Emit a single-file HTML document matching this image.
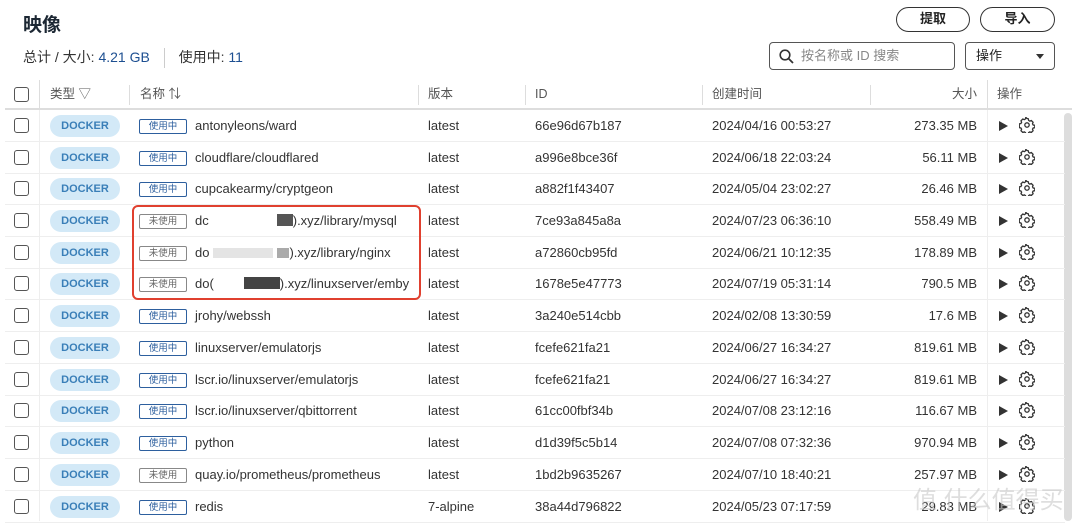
<!DOCTYPE html>
<html><head><meta charset="utf-8">
<style>
*{margin:0;padding:0;box-sizing:border-box}
body{width:1080px;height:521px;overflow:hidden;background:#fff;font-family:"Liberation Sans","Noto Sans CJK SC",sans-serif;color:#222;position:relative}
.abs{position:absolute}
h1{position:absolute;left:23px;top:10px;font-size:19px;font-weight:bold;color:#1c2733}
.sum{position:absolute;left:23px;top:47px;font-size:14px;color:#333}
.sum b{color:#1d4f91;font-weight:normal}
.btn{position:absolute;top:7px;height:25px;border:1.5px solid #333;border-radius:13px;font-size:13px;font-weight:bold;text-align:center;line-height:22px;color:#222}
.search{position:absolute;left:769px;top:42px;width:186px;height:28px;border:1.3px solid #555;border-radius:4px;font-size:13px;color:#888;line-height:26px;padding-left:31px}
.sel{position:absolute;left:965px;top:42px;width:90px;height:28px;border:1.3px solid #555;border-radius:4px;font-size:13px;color:#222;line-height:26px;padding-left:10px}
.hdr{position:absolute;left:5px;top:80px;width:1067px;height:30px;border-bottom:2px solid #ddd}
.hdr span{position:absolute;top:6px;font-size:12.5px;color:#555;line-height:16px}
.vs{position:absolute;top:5px;width:1px;height:20px;background:#ddd}
.row{position:absolute;left:5px;width:1060px;height:32px;border-bottom:1px solid #eee}
.cb{position:absolute;left:9px;top:8px;width:15px;height:15px;border:1.7px solid #555;border-radius:3px}
.pill{position:absolute;left:45px;top:5px;width:70px;height:22px;border-radius:11px;background:#d3e9f7;color:#3a7fb8;font-size:11px;font-weight:bold;text-align:center;line-height:23px}
.tag{position:absolute;left:134px;top:9px;width:48px;height:15px;border:1px solid #2d5f9e;border-radius:2px;font-size:9.5px;color:#2d5f9e;text-align:center;line-height:13px}
.tag.un{border-color:#888;color:#666}
.row span{position:absolute;top:8px;font-size:13px;color:#333;white-space:nowrap;line-height:16px}
.nm{left:190px}.vr{left:423px}.id{left:530px}.tm{left:707px}.sz{right:88px;text-align:right}
.play{position:absolute;left:994px;top:11px;width:0;height:0;border-left:9px solid #333;border-top:5px solid transparent;border-bottom:5px solid transparent}
.gear{position:absolute;left:1014px;top:7px}
</style></head><body>
<svg width="0" height="0" style="position:absolute"><defs><g id="g"><path d="M8 1.5l1.3.3.3 1.6 1.2.7 1.5-.6 1.8 1.8-.6 1.5.7 1.2 1.6.3v2.4l-1.6.3-.7 1.2.6 1.5-1.8 1.8-1.5-.6-1.2.7-.3 1.6H6.8l-.3-1.6-1.2-.7-1.5.6-1.8-1.8.6-1.5-.7-1.2-1.6-.3V6.8l1.6-.3.7-1.2-.6-1.5 1.8-1.8 1.5.6 1.2-.7.3-1.6z" fill="none" stroke="#333" stroke-width="1.3"/><circle cx="8" cy="8" r="2.2" fill="none" stroke="#333" stroke-width="1.3"/></g></defs></svg>
<h1>映像</h1>
<div class="sum">总计 / 大小: <b>4.21 GB</b> <span style="display:inline-block;width:1px;height:20px;background:#ccc;vertical-align:middle;margin:0 10px"></span> 使用中: <b>11</b></div>
<div class="btn" style="left:896px;width:74px">提取</div>
<div class="btn" style="left:980px;width:75px">导入</div>
<div class="search"><svg class="abs" style="left:9px;top:6px" width="15" height="15" viewBox="0 0 15 15"><circle cx="6" cy="6" r="4.8" fill="none" stroke="#333" stroke-width="1.6"/><path d="M9.5 9.5L14 14" stroke="#333" stroke-width="1.8"/></svg>按名称或 ID 搜索</div>
<div class="sel">操作<span class="abs" style="right:10px;top:11px;width:0;height:0;border-left:4.5px solid transparent;border-right:4.5px solid transparent;border-top:5px solid #333"></span></div>
<div class="hdr">
<div class="cb" style="top:7px"></div>
<div class="vs" style="left:34px;top:0;height:30px"></div>
<span style="left:45px">类型 ▽</span>
<div class="vs" style="left:124px"></div>
<span style="left:135px">名称 ⇅</span>
<div class="vs" style="left:413px"></div>
<span style="left:423px">版本</span>
<div class="vs" style="left:520px"></div>
<span style="left:530px">ID</span>
<div class="vs" style="left:697px"></div>
<span style="left:707px">创建时间</span>
<div class="vs" style="left:865px"></div>
<span style="right:95px">大小</span>
<div class="vs" style="left:982px;top:0;height:30px"></div>
<span style="left:992px">操作</span>
</div>
<div class="abs" style="left:39px;top:110px;width:1px;height:411px;background:#eee"></div>
<div class="abs" style="left:987px;top:110px;width:1px;height:411px;background:#eee"></div>
<div class="abs" style="left:1064px;top:113px;width:8px;height:408px;background:#ddd;border-radius:4px"></div>

<div class="row" style="top:110px"><div class="cb"></div><div class="pill">DOCKER</div><div class="tag">使用中</div><span class="nm">antonyleons/ward</span><span class="vr">latest</span><span class="id">66e96d67b187</span><span class="tm">2024/04/16 00:53:27</span><span class="sz">273.35 MB</span><div class="play"></div><svg class="gear" width="16" height="16" viewBox="0 0 16 16"><use href="#g"/></svg></div>
<div class="row" style="top:142px"><div class="cb"></div><div class="pill">DOCKER</div><div class="tag">使用中</div><span class="nm">cloudflare/cloudflared</span><span class="vr">latest</span><span class="id">a996e8bce36f</span><span class="tm">2024/06/18 22:03:24</span><span class="sz">56.11 MB</span><div class="play"></div><svg class="gear" width="16" height="16" viewBox="0 0 16 16"><use href="#g"/></svg></div>
<div class="row" style="top:173px"><div class="cb"></div><div class="pill">DOCKER</div><div class="tag">使用中</div><span class="nm">cupcakearmy/cryptgeon</span><span class="vr">latest</span><span class="id">a882f1f43407</span><span class="tm">2024/05/04 23:02:27</span><span class="sz">26.46 MB</span><div class="play"></div><svg class="gear" width="16" height="16" viewBox="0 0 16 16"><use href="#g"/></svg></div>
<div class="row" style="top:205px"><div class="cb"></div><div class="pill">DOCKER</div><div class="tag un">未使用</div><span class="nm">dc<i style="display:inline-block;width:68px"></i><i style="display:inline-block;width:16px;height:12px;background:#555;vertical-align:-1px"></i>).xyz/library/mysql</span><span class="vr">latest</span><span class="id">7ce93a845a8a</span><span class="tm">2024/07/23 06:36:10</span><span class="sz">558.49 MB</span><div class="play"></div><svg class="gear" width="16" height="16" viewBox="0 0 16 16"><use href="#g"/></svg></div>
<div class="row" style="top:237px"><div class="cb"></div><div class="pill">DOCKER</div><div class="tag un">未使用</div><span class="nm">do<i style="display:inline-block;width:60px;height:10px;background:#e4e4e4;margin:0 4px;vertical-align:-1px"></i><i style="display:inline-block;width:12px;height:10px;background:#aaa;vertical-align:-1px"></i>).xyz/library/nginx</span><span class="vr">latest</span><span class="id">a72860cb95fd</span><span class="tm">2024/06/21 10:12:35</span><span class="sz">178.89 MB</span><div class="play"></div><svg class="gear" width="16" height="16" viewBox="0 0 16 16"><use href="#g"/></svg></div>
<div class="row" style="top:268px"><div class="cb"></div><div class="pill">DOCKER</div><div class="tag un">未使用</div><span class="nm">do(<i style="display:inline-block;width:30px"></i><i style="display:inline-block;width:36px;height:12px;background:#444;vertical-align:-1px"></i>).xyz/linuxserver/emby</span><span class="vr">latest</span><span class="id">1678e5e47773</span><span class="tm">2024/07/19 05:31:14</span><span class="sz">790.5 MB</span><div class="play"></div><svg class="gear" width="16" height="16" viewBox="0 0 16 16"><use href="#g"/></svg></div>
<div class="row" style="top:300px"><div class="cb"></div><div class="pill">DOCKER</div><div class="tag">使用中</div><span class="nm">jrohy/webssh</span><span class="vr">latest</span><span class="id">3a240e514cbb</span><span class="tm">2024/02/08 13:30:59</span><span class="sz">17.6 MB</span><div class="play"></div><svg class="gear" width="16" height="16" viewBox="0 0 16 16"><use href="#g"/></svg></div>
<div class="row" style="top:332px"><div class="cb"></div><div class="pill">DOCKER</div><div class="tag">使用中</div><span class="nm">linuxserver/emulatorjs</span><span class="vr">latest</span><span class="id">fcefe621fa21</span><span class="tm">2024/06/27 16:34:27</span><span class="sz">819.61 MB</span><div class="play"></div><svg class="gear" width="16" height="16" viewBox="0 0 16 16"><use href="#g"/></svg></div>
<div class="row" style="top:364px"><div class="cb"></div><div class="pill">DOCKER</div><div class="tag">使用中</div><span class="nm">lscr.io/linuxserver/emulatorjs</span><span class="vr">latest</span><span class="id">fcefe621fa21</span><span class="tm">2024/06/27 16:34:27</span><span class="sz">819.61 MB</span><div class="play"></div><svg class="gear" width="16" height="16" viewBox="0 0 16 16"><use href="#g"/></svg></div>
<div class="row" style="top:395px"><div class="cb"></div><div class="pill">DOCKER</div><div class="tag">使用中</div><span class="nm">lscr.io/linuxserver/qbittorrent</span><span class="vr">latest</span><span class="id">61cc00fbf34b</span><span class="tm">2024/07/08 23:12:16</span><span class="sz">116.67 MB</span><div class="play"></div><svg class="gear" width="16" height="16" viewBox="0 0 16 16"><use href="#g"/></svg></div>
<div class="row" style="top:427px"><div class="cb"></div><div class="pill">DOCKER</div><div class="tag">使用中</div><span class="nm">python</span><span class="vr">latest</span><span class="id">d1d39f5c5b14</span><span class="tm">2024/07/08 07:32:36</span><span class="sz">970.94 MB</span><div class="play"></div><svg class="gear" width="16" height="16" viewBox="0 0 16 16"><use href="#g"/></svg></div>
<div class="row" style="top:459px"><div class="cb"></div><div class="pill">DOCKER</div><div class="tag un">未使用</div><span class="nm">quay.io/prometheus/prometheus</span><span class="vr">latest</span><span class="id">1bd2b9635267</span><span class="tm">2024/07/10 18:40:21</span><span class="sz">257.97 MB</span><div class="play"></div><svg class="gear" width="16" height="16" viewBox="0 0 16 16"><use href="#g"/></svg></div>
<div class="row" style="top:491px"><div class="cb"></div><div class="pill">DOCKER</div><div class="tag">使用中</div><span class="nm">redis</span><span class="vr">7-alpine</span><span class="id">38a44d796822</span><span class="tm">2024/05/23 07:17:59</span><span class="sz">29.83 MB</span><div class="play"></div><svg class="gear" width="16" height="16" viewBox="0 0 16 16"><use href="#g"/></svg></div>

<div class="abs" style="left:132px;top:205px;width:289px;height:95px;border:2.5px solid #e0402f;border-radius:6px"></div>
<div class="abs" style="left:913px;top:480px;font-size:24px;color:rgba(200,200,200,0.6);white-space:nowrap">值 什么值得买</div>
</body></html>
